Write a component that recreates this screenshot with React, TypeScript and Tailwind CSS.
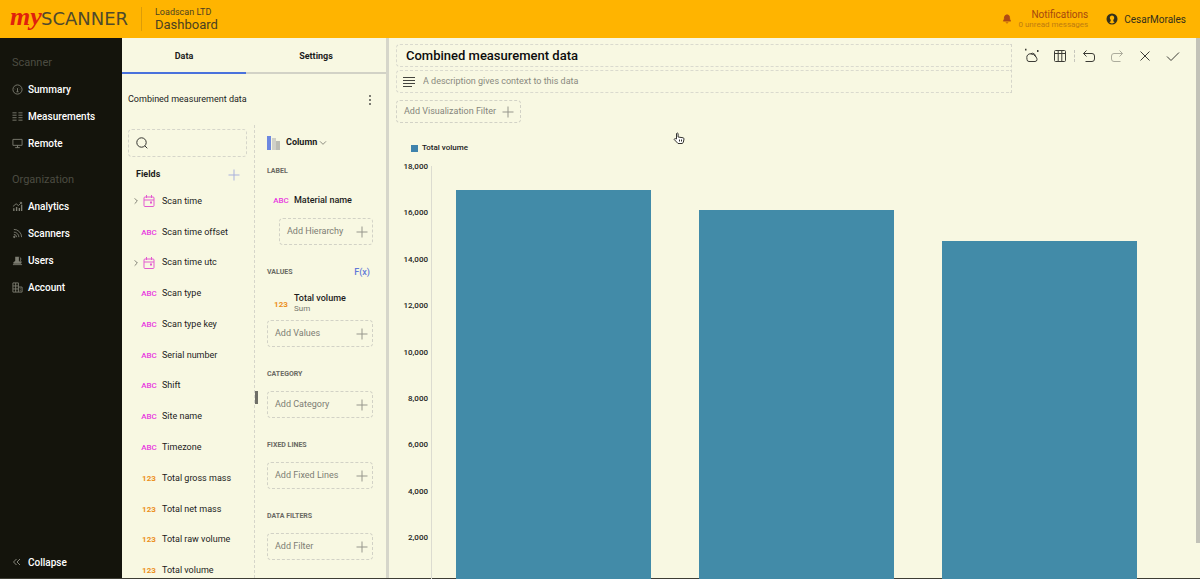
import type { ReactNode } from "react";
import { LuBell } from "react-icons/lu";

type FieldKind = "date" | "text" | "number";

const fields: { name: string; kind: FieldKind }[] = [
  { name: "Scan time", kind: "date" },
  { name: "Scan time offset", kind: "text" },
  { name: "Scan time utc", kind: "date" },
  { name: "Scan type", kind: "text" },
  { name: "Scan type key", kind: "text" },
  { name: "Serial number", kind: "text" },
  { name: "Shift", kind: "text" },
  { name: "Site name", kind: "text" },
  { name: "Timezone", kind: "text" },
  { name: "Total gross mass", kind: "number" },
  { name: "Total net mass", kind: "number" },
  { name: "Total raw volume", kind: "number" },
  { name: "Total volume", kind: "number" },
];

const axisMax = 18000;
const ticks = ["18,000", "16,000", "14,000", "12,000", "10,000", "8,000", "6,000", "4,000", "2,000"];
const bars = [16970, 16110, 14770];

export default function App() {
  return (
    <div className="h-screen flex flex-col overflow-hidden bg-[#f8f8e2] text-[#1c1c1c] font-['Roboto',sans-serif]">
      <Header />
      <div className="flex flex-1 min-h-0 border-b border-[#3d3d34]">
        <Sidebar />
        <DataPanel />
        <Visualization />
      </div>
    </div>
  );
}

function Header() {
  return (
    <header className="h-[38px] shrink-0 flex items-center bg-[#ffb400] pl-2.5 pr-3.5">
      <Logo />
      <div className="h-6 border-l border-[#dc9c08] ml-3 pl-[13px] flex flex-col justify-center">
        <p className="text-[9px] leading-[11px] text-[#4b4120]">Loadscan LTD</p>
        <h1 className="text-[13px] leading-[13px] text-[#4b4120]">Dashboard</h1>
      </div>
      <a href="#notifications" className="ml-auto flex items-center gap-1.5">
        <LuBell className="w-2.5 h-3 text-[#b04a14] fill-current" />
        <span className="flex flex-col items-end">
          <span className="text-[10px] leading-[11px] text-[#a5480f]">Notifications</span>
          <span className="text-[8px] leading-[9px] text-[#c07c10]">0 unread messages</span>
        </span>
      </a>
      <button type="button" className="ml-[18px] flex items-center gap-1.5 text-[10px] text-[#33301c]">
        <svg className="w-3 h-3" viewBox="0 0 12 12">
          <circle cx="6" cy="6" r="5.5" fill="#33301c" />
          <path
            d="M6 2.4c1.4 0 2.2 1 2.2 2.3 0 .9-.4 1.7-.9 2.1v1.1c0 .6 1 .7 1.4 1.3A4.4 4.4 0 0 1 6 10.4a4.4 4.4 0 0 1-2.7-1.2c.4-.6 1.4-.7 1.4-1.3V6.8c-.5-.4-.9-1.2-.9-2.1C3.8 3.4 4.6 2.4 6 2.4z"
            fill="#ffb400"
          />
        </svg>
        CesarMorales
      </button>
    </header>
  );
}

function Logo() {
  return (
    <svg className="w-[119px] h-8 shrink-0" viewBox="0 0 119 32" role="img" aria-label="myScanner">
      <text x="0" y="22" fontFamily="Liberation Serif, serif" fontSize="26" fontWeight="700" fontStyle="italic" fill="#e0200c">
        my
      </text>
      <text x="31" y="22" fontFamily="DejaVu Sans, sans-serif" fontSize="18" fill="#4f4a2c">
        SCANNER
      </text>
    </svg>
  );
}

/* ---------- Sidebar ---------- */

function Sidebar() {
  return (
    <nav className="w-[122px] shrink-0 bg-[#14140c] flex flex-col pl-3 pt-4 pb-[7px] text-white">
      <h2 className="text-[11px] leading-[18px] text-[#4c4c42]">Scanner</h2>
      <ul className="mt-1">
        <NavItem label="Summary">
          <circle cx="6" cy="6" r="5" />
          <path d="M6 8.5V4.5M4.8 8.5h2.4M3 5.5l.5.2M9 5.5l-.5.2M4.2 3.5l.3.3M7.8 3.5l-.3.3" />
        </NavItem>
        <NavItem label="Measurements">
          <path d="M.5 2h4.500M.5 4.600h4.500M.5 7.300h4.500M.5 10h4.500M7 2h4.500M7 4.600h4.500M7 7.300h4.500M7 10h4.500" />
        </NavItem>
        <NavItem label="Remote">
          <path d="M1 1.500h10v6.500H1zM6 8v2.500M3.500 10.500h5" />
        </NavItem>
      </ul>
      <h2 className="mt-3.5 text-[11px] leading-[18px] text-[#4c4c42]">Organization</h2>
      <ul className="mt-1">
        <NavItem label="Analytics">
          <path d="M2 11V8M5 11V6.500M8 11V7.500M10.500 11V4" strokeWidth="1.500" />
          <path d="M1 6l3.500-3 2.500 2L10.500 1.500M8.500 1.500h2v2" />
        </NavItem>
        <NavItem label="Scanners">
          <path d="M2 1.500A8.500 8.500 0 0 1 10.500 10M2 4.500A5.500 5.500 0 0 1 7.500 10M2 7a3 3 0 0 1 3 3" />
          <circle cx="2.500" cy="9.700" r=".8" fill="currentColor" />
        </NavItem>
        <NavItem label="Users">
          <path d="M3.500 2h4v4.500l2.500 1.500v1.500H1.500V8l2-1.500z" fill="currentColor" stroke="none" />
          <path d="M8.500 2.500c1.500.5 1.500 3 .3 4l2 1.500M1 10.500h10" />
        </NavItem>
        <NavItem label="Account">
          <path d="M1 11V1h6v10M7 5.500h4V11H1M1 4.300h6M1 7.600h6M4 1v10M9 7v1M9 9v1" />
        </NavItem>
      </ul>
      <button type="button" className="mt-auto h-[18px] flex items-center gap-1 text-[10px] font-medium">
        <Icon className="w-3 h-3 text-[#85857a]">
          <path d="M4.500 3l-3 3 3 3M8 3L5 6l3 3" />
        </Icon>
        Collapse
      </button>
    </nav>
  );
}

function NavItem({ label, children }: { label: string; children: ReactNode }) {
  return (
    <li>
      <a href="#nav" className="h-[27px] flex items-center gap-[5px] text-[10px] font-medium">
        <Icon className="w-[11px] h-[11px] text-[#7d7d72]">{children}</Icon>
        {label}
      </a>
    </li>
  );
}

/* ---------- Data panel ---------- */

function DataPanel() {
  return (
    <section className="w-[264px] shrink-0 flex flex-col">
      <div role="tablist" className="h-9 shrink-0 flex text-[9px] font-bold">
        <button type="button" role="tab" aria-selected="true" className="w-[124px] pt-1 border-b-2 border-[#4a72dc]">
          Data
        </button>
        <button type="button" role="tab" aria-selected="false" className="flex-1 pt-1 border-b-2 border-[#d2d2c6]">
          Settings
        </button>
      </div>
      <div className="h-[51px] shrink-0 flex items-center justify-between pl-1.5 pr-3">
        <p className="text-[9px]">Combined measurement data</p>
        <button type="button" aria-label="More options">
          <svg className="w-2 h-3" viewBox="0 0 8 12" fill="#55554f">
            <circle cx="4" cy="2" r="1" />
            <circle cx="4" cy="6" r="1" />
            <circle cx="4" cy="10" r="1" />
          </svg>
        </button>
      </div>
      <div className="flex flex-1 min-h-0">
        <FieldList />
        <Config />
      </div>
    </section>
  );
}

function FieldList() {
  return (
    <div className="w-[133px] shrink-0 pl-1.5 pt-1 overflow-hidden border-r border-dashed border-[#d6d6ca]">
      <label className="w-[119px] h-7 flex items-center gap-1 pl-[7px] border border-dashed border-[#d6d6ca] rounded-sm">
        <Icon className="w-3 h-3 text-[#33332e]">
          <circle cx="5.500" cy="5.500" r="4.700" />
          <path d="M8.800 8.800l2.500 2.500" />
        </Icon>
        <input type="text" aria-label="Search fields" className="w-20 text-[9px] outline-none" />
      </label>
      <div className="h-[22px] mt-[7px] flex items-center justify-between pl-2 pr-3.5">
        <h3 className="text-[9px] font-bold">Fields</h3>
        <button type="button" aria-label="Add field">
          <Plus className="w-3 h-3 text-[#a9b1dc]" />
        </button>
      </div>
      <ul className="h-[400px] flex flex-col">
        {fields.map((field) => (
          <li key={field.name} className="flex-1 flex items-center pl-1 text-[9px] leading-[11px]">
            <span className="w-2.5 flex">
              {field.kind === "date" && (
                <Icon className="w-2 h-2 text-[#44443e]">
                  <path d="M4 2l4 4-4 4" />
                </Icon>
              )}
            </span>
            <FieldIcon kind={field.kind} />
            <span className="ml-1.5">{field.name}</span>
          </li>
        ))}
      </ul>
    </div>
  );
}

function FieldIcon({ kind }: { kind: FieldKind }) {
  if (kind === "date") {
    return (
      <svg className="w-3.5 h-3 shrink-0" viewBox="0 0 12 12" fill="none" stroke="#e35ad0">
        <rect x="1" y="2" width="10" height="9.500" rx="1" />
        <path d="M1 5h10M3.500 0v3M8.500 0v3" />
        <rect x="7.500" y="7" width="1" height="1" fill="#e35ad0" />
      </svg>
    );
  }
  if (kind === "text") {
    return <span className="w-3.5 flex justify-center text-[8px] font-medium text-[#e83ae0]">ABC</span>;
  }
  return <span className="w-3.5 flex justify-center text-[8px] font-bold text-[#ec8f1c]">123</span>;
}

function Config() {
  return (
    <div className="relative flex-1 pl-3 pr-[13px] pt-[7px] overflow-hidden">
      <span className="absolute left-0 top-[266px] w-[3px] h-[13px] bg-[#6f6f68]" />
      <button type="button" className="h-5 mb-2.5 pt-px flex items-center text-[9px] font-bold">
        <svg className="w-3.5 h-3.5 mr-[5px]" viewBox="0 0 14 14">
          <rect x="0" y="0" width="4" height="14" fill="#6d88e0" />
          <rect x="5" y="2" width="4" height="12" fill="#d0d0c8" />
          <rect x="9" y="5" width="4" height="9" fill="#bcbcb4" />
        </svg>
        Column
        <Icon className="w-2 h-2 ml-0.5 text-[#55554f]">
          <path d="M1.500 3.500L6 8l4.500-4.500" />
        </Icon>
      </button>

      <SectionTitle>LABEL</SectionTitle>
      <div className="h-[26px] mb-1 flex items-center pl-[7px] text-[9px] font-medium">
        <FieldIcon kind="text" />
        <span className="ml-1.5">Material name</span>
      </div>
      <div className="pl-3">
        <AddButton label="Add Hierarchy" />
      </div>

      <div className="flex justify-between pr-[3px]">
        <SectionTitle>VALUES</SectionTitle>
        <button type="button" className="h-[18px] text-[9px] leading-[18px] font-medium text-[#6179d8]">F(x)</button>
      </div>
      <div className="h-[31px] flex items-center pl-[7px]">
        <FieldIcon kind="number" />
        <span className="ml-1.5 flex flex-col pb-1">
          <span className="text-[9px] leading-[11px] font-medium">Total volume</span>
          <span className="text-[8px] leading-[9px] text-[#77776e]">Sum</span>
        </span>
      </div>
      <AddButton label="Add Values" />

      <SectionTitle>CATEGORY</SectionTitle>
      <AddButton label="Add Category" />

      <SectionTitle>FIXED LINES</SectionTitle>
      <AddButton label="Add Fixed Lines" />

      <SectionTitle>DATA FILTERS</SectionTitle>
      <AddButton label="Add Filter" />
    </div>
  );
}

function SectionTitle({ children }: { children: ReactNode }) {
  return <h4 className="h-[18px] mb-2 text-[7px] leading-[18px] font-bold text-[#6a6a62]">{children}</h4>;
}

function AddButton({ label }: { label: string }) {
  return (
    <button
      type="button"
      className="w-full h-[27px] mb-[18px] flex items-center justify-between pl-[7px] pr-1 border border-dashed border-[#d2d2c6] rounded-sm text-[9px] text-[#7d7d74]"
    >
      {label}
      <Plus className="w-3 h-3 text-[#96968c]" />
    </button>
  );
}

/* ---------- Visualization ---------- */

function Visualization() {
  return (
    <main className="relative flex-1 min-w-0 flex border-l-3 border-[#d6d6ca]">
      <div className="flex-1 min-w-0 pl-[7px] pt-1.5 flex flex-col">
        <div className="flex shrink-0">
          <div className="flex-1 flex flex-col gap-[3px] border-r border-dashed border-[#d6d6ca]">
            <input
              type="text"
              aria-label="Title"
              defaultValue="Combined measurement data"
              className="h-[23px] pl-[9px] border border-r-0 border-dashed border-[#dadace] rounded-l-sm text-[13px] font-medium text-[#0c0c0c] outline-none"
            />
            <label className="h-[23px] flex items-center gap-2 pl-1.5 border border-r-0 border-dashed border-[#dadace] rounded-l-sm">
              <Icon className="w-3 h-3 text-[#44443e]">
                <path d="M0 1.500h12M0 4.500h12M0 7.500h12M0 10.500h9" />
              </Icon>
              <input
                type="text"
                aria-label="Description"
                placeholder="A description gives context to this data"
                className="flex-1 text-[9px] placeholder:text-[#8a8a80] outline-none"
              />
            </label>
          </div>
          <Toolbar />
        </div>
        <button
          type="button"
          className="w-[125px] h-[23px] mt-[7px] shrink-0 flex items-center justify-between pl-[7px] pr-1.5 border border-dashed border-[#d2d2c6] rounded-sm text-[9px] text-[#85857c]"
        >
          Add Visualization Filter
          <Plus className="w-3 h-3 text-[#96968c]" />
        </button>
        <Chart />
      </div>
      <div className="w-1 shrink-0">
        <div className="h-[505px] max-h-full bg-[#c2c2b8]" />
      </div>
      <svg className="absolute left-[284px] top-[94px] w-3 h-3" viewBox="0 0 12 12" fill="#fff" stroke="#33332e">
        <path d="M3.500 7V1.500q.8-1 1.600 0V5l5 .8q1 .2.9 1.200l-.6 3-1 1.500H5L1.200 7.500q.3-1.200 1.300-.8z" />
        <path d="M6.500 7.500v2M8.500 7.500v2" />
      </svg>
    </main>
  );
}

function Toolbar() {
  return (
    <div className="w-[184px] h-6 shrink-0 flex items-center pl-1.5 text-[#3c3c36]">
      <ToolButton label="Suggest">
        <path d="M.8 7.500a3.500 3.500 0 0 1 3.700-3.700q3.500 0 5.500 3.200 1 1 1 2.500 0 2-2 2H3q-2 0-2-2z" />
        <path d="M4.500 3.800q2-1.300 4 .2l1.500 3" />
        <path d="M-1-.3h1.500M11 1h1.500" strokeWidth="1.800" />
      </ToolButton>
      <ToolButton label="Data grid">
        <rect x=".5" y=".5" width="11" height="11" rx="1" />
        <path d="M.5 3.500h11M4.200.5v11M7.800.5v11" />
      </ToolButton>
      <span className="h-3 border-l border-dashed border-[#c6c6bc]" />
      <ToolButton label="Undo">
        <path d="M3.500.5L.5 3.500l3 3M.5 3.500H9q2.500 0 2.500 2.500v3q0 2.500-2.500 2.500H2.500" />
      </ToolButton>
      <ToolButton label="Redo" muted>
        <path d="M8.500.5l3 3-3 3M11.500 3.500H3Q.5 3.500.5 6v3q0 2.500 2.500 2.500h6.500" />
      </ToolButton>
      <ToolButton label="Close">
        <path d="M1.500 1.500l9 9M10.500 1.500l-9 9" />
      </ToolButton>
      <ToolButton label="Apply">
        <path d="M0 6.500l4 4 8-8" />
      </ToolButton>
    </div>
  );
}

function ToolButton({ label, muted, children }: { label: string; muted?: boolean; children: ReactNode }) {
  return (
    <button type="button" aria-label={label} className={muted ? "w-7 flex justify-center opacity-40" : "w-7 flex justify-center"}>
      <Icon className="w-3 h-3 overflow-visible">{children}</Icon>
    </button>
  );
}

function Chart() {
  return (
    <div className="mt-3.5 flex flex-col shrink-0">
      <div className="h-[22px] flex items-center gap-1 pl-[15px] text-[8px] font-medium">
        <span className="w-[7px] h-[7px] bg-[#3f83ac]" />
        Total volume
      </div>
      <div className="flex">
        <div className="w-8 h-[387px] flex flex-col justify-between text-right text-[8px] leading-4 font-medium">
          {ticks.map((tick) => (
            <span key={tick}>{tick}</span>
          ))}
        </div>
        <div className="flex-1 h-[418px] mt-[7px] ml-[3px] mr-[35px] flex items-end border-l border-[#dcdcd0]">
          {bars.map((value) => (
            <div key={value} className="flex-1 h-full flex items-end justify-center">
              <div className="w-4/5 bg-[#428ba8]" style={{ height: `${(value / axisMax) * 100}%` }} />
            </div>
          ))}
        </div>
      </div>
    </div>
  );
}

/* ---------- Icons ---------- */

function Icon({ className, children }: { className: string; children: ReactNode }) {
  return (
    <svg className={className} viewBox="0 0 12 12" fill="none" stroke="currentColor" strokeWidth="1">
      {children}
    </svg>
  );
}

function Plus({ className }: { className: string }) {
  return (
    <Icon className={className}>
      <path d="M6 .5v11M.5 6h11" />
    </Icon>
  );
}
